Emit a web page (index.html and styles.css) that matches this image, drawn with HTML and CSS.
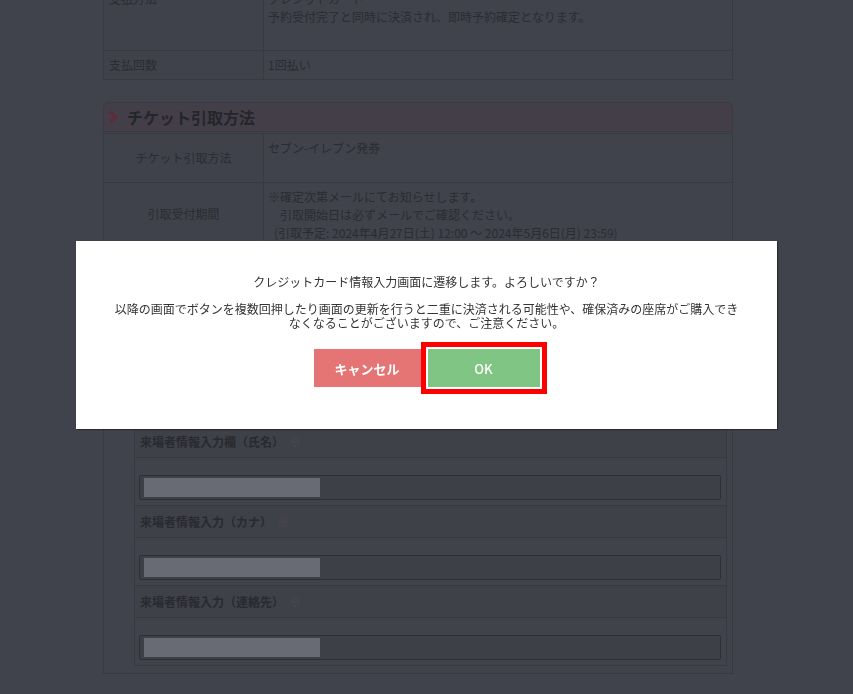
FILE: index.html
```html
<!DOCTYPE html>
<html lang="ja">
<head>
<meta charset="utf-8">
<title>チケット購入</title>
<link rel="stylesheet" href="styles.css">
</head>
<body>
<div class="page">
  <div class="tbl pay">
    <div class="row r-method">
      <div class="th th-top">支払方法</div>
      <div class="td">クレジットカード<br>予約受付完了と同時に決済され、即時予約確定となります。</div>
    </div>
    <div class="row r-count">
      <div class="th">支払回数</div>
      <div class="td">1回払い</div>
    </div>
  </div>

  <h2 class="sec-head"><svg class="chev" width="10" height="14" viewBox="0 0 10 14"><polyline points="2,2 7.5,7 2,12" fill="none" stroke="#5f2b3b" stroke-width="3.2" stroke-linejoin="miter"/></svg>チケット引取方法</h2>

  <div class="tbl ticket">
    <div class="row r-how">
      <div class="th th-center">チケット引取方法</div>
      <div class="td">セブン-イレブン発券</div>
    </div>
    <div class="row r-period">
      <div class="th th-center">引取受付期間</div>
      <div class="td">※確定次第メールにてお知らせします。<br>　引取開始日は必ずメールでご確認ください。<br>&ensp;(引取予定: 2024年4月27日(土) 12:00 ～ 2024年5月6日(月) 23:59)</div>
    </div>
  </div>

  <section class="visitor">
    <div class="vbox">
      <div class="vspacer"></div>
      <div class="vlabel">来場者情報入力欄（氏名）<span class="req">※</span></div>
      <div class="vinput"><div class="field"><span class="blur"></span></div></div>
      <div class="vlabel">来場者情報入力（カナ）<span class="req">※</span></div>
      <div class="vinput"><div class="field"><span class="blur"></span></div></div>
      <div class="vlabel">来場者情報入力（連絡先）<span class="req">※</span></div>
      <div class="vinput"><div class="field"><span class="blur"></span></div></div>
    </div>
  </section>
</div>

<div class="overlay">
  <div class="modal">
    <p class="msg-main">クレジットカード情報入力画面に遷移します。よろしいですか？</p>
    <p class="msg-note">以降の画面でボタンを複数回押したり画面の更新を行うと二重に決済される可能性や、確保済みの座席がご購入できなくなることがございますので、ご注意ください。</p>
    <div class="actions">
      <button class="btn btn-cancel">キャンセル</button>
      <button class="btn btn-ok">OK</button>
    </div>
  </div>
</div>
</body>
</html>
```

FILE: styles.css
```css
* { box-sizing: border-box; }

html, body {
  margin: 0;
  padding: 0;
  height: 100%;
  overflow: hidden;
}

body {
  background: #40434c;
  font-family: "Noto Sans CJK JP", "Noto Sans", sans-serif;
  color: #2a2c32;
  font-size: 12px;
}

.page {
  width: 630px;
  margin-left: 103px;
}

/* tables */
.tbl {
  border: 1px solid #383a42;
  border-bottom: 0;
}
.row {
  display: grid;
  grid-template-columns: 160px 1fr;
  border-bottom: 1px solid #383a42;
}
.th {
  border-right: 1px solid #383a42;
  background: #3f424a;
  padding: 5px 5px;
  line-height: 18px;
  display: flex;
  align-items: center;
}
.th-top { align-items: flex-start; padding-top: 10px; }
.th-center { justify-content: center; }
.td {
  padding: 5px 4px;
  line-height: 18px;
}

.pay { margin-top: -21px; }
.r-method .td { padding: 10px 4px 24px; }

/* section header */
.sec-head {
  margin: 22px 0 1px;
  height: 30px;
  display: flex;
  align-items: center;
  padding-left: 4px;
  background: #433e48;
  border: 1px solid #3b3a42;
  border-radius: 6px 6px 0 0;
  font-size: 16px;
  font-weight: bold;
  color: #25262b;
}
.chev { margin-right: 9px; flex: none; }

.ticket .row { min-height: 49px; }
.ticket .td { padding: 5px 4px 3px; }

/* visitor form */
.visitor {
  margin-top: 15px;
  border: 1px solid #383a42;
  padding: 10px 5px 7px 30px;
}
.vbox {
  border: 1px solid #383a42;
}
.vbox > div { border-bottom: 1px solid #383a42; }
.vbox > div:last-child { border-bottom: 0; }
.vspacer { height: 153px; }
.vlabel {
  height: 32px;
  display: flex;
  align-items: center;
  padding-left: 5px;
  font-weight: bold;
  font-size: 12px;
  color: #292a30;
  background: #3f4149;
}
.req {
  color: #51474f;
  font-weight: normal;
  margin-left: 5px;
}
.vinput {
  height: 48px;
  padding: 17px 5px 5px 4px;
}
.vbox > .vinput:last-child { height: 47px; }
.field {
  height: 25px;
  border: 1px solid #2d2f35;
  background: #3e4048;
  border-radius: 2px;
  padding: 2px 4px;
}
.blur {
  display: block;
  width: 176px;
  height: 19px;
  background: #686b73;
}

/* modal */
.overlay {
  position: fixed;
  inset: 0;
}
.modal {
  position: absolute;
  top: 241px;
  left: 76px;
  width: 701px;
  height: 188px;
  background: #fff;
  box-shadow: 1px 1px 1px rgba(0, 0, 0, 0.35);
  padding: 34px 35px 0;
  text-align: center;
  color: #333;
}
.msg-main {
  margin: 0;
  font-size: 12px;
  line-height: 14px;
}
.msg-note {
  margin: 13px 0 0;
  font-size: 12px;
  line-height: 14px;
}
.actions {
  margin-top: 19px;
  display: flex;
  justify-content: center;
  gap: 7px;
}
.btn {
  height: 38px;
  border: 0;
  color: #fff;
  font-family: inherit;
  font-size: 13px;
  font-weight: 500;
  padding: 0;
}
.btn-cancel {
  width: 107px;
  background: #e57474;
  font-weight: bold;
}
.btn-ok {
  width: 112px;
  background: #80c583;
  outline: 5px solid #ff0000;
  outline-offset: 2px;
}
```
